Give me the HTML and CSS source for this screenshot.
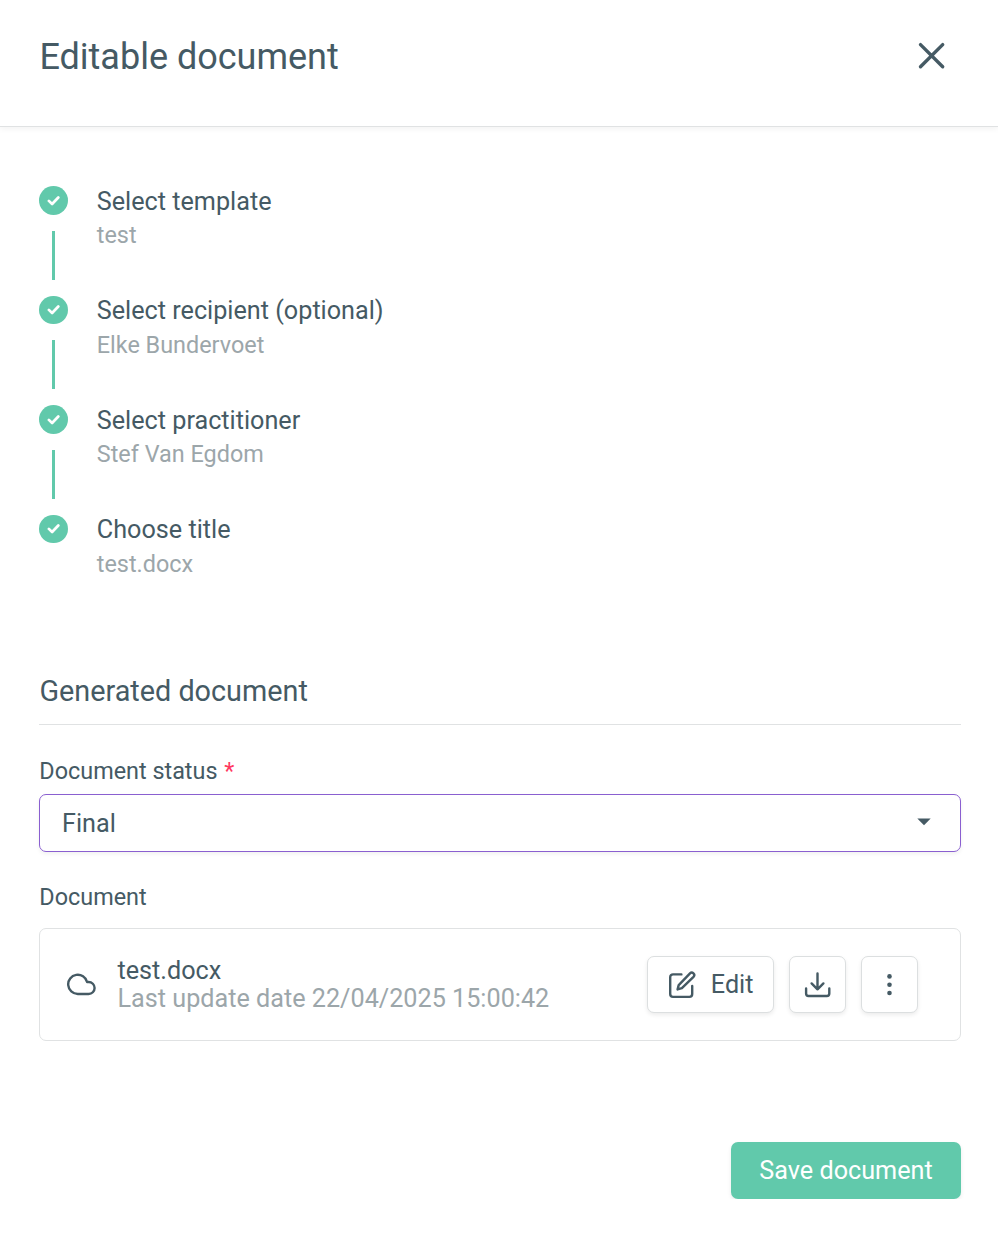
FILE: index.html
```html
<!DOCTYPE html>
<html lang="en">
<head>
<meta charset="utf-8">
<title>Editable document</title>
<link rel="stylesheet" href="styles.css">
</head>
<body>
<header class="header">
  <h1 class="title">Editable document</h1>
  <button class="close" aria-label="Close">
    <svg width="28" height="28" viewBox="0 0 28 28"><path d="M2.5 2.6 24.7 24.8M24.7 2.6 2.5 24.8"/></svg>
  </button>
</header>
<main class="content">
  <ol class="steps">
    <li class="step">
      <div class="marker"><span class="dot"><svg width="14" height="12" viewBox="0 0 14 12"><path d="M1.9 5.9 5.1 9 11.3 2.5"/></svg></span><span class="line"></span></div>
      <div class="step-text"><span class="step-name">Select template</span><span class="step-value">test</span></div>
    </li>
    <li class="step">
      <div class="marker"><span class="dot"><svg width="14" height="12" viewBox="0 0 14 12"><path d="M1.9 5.9 5.1 9 11.3 2.5"/></svg></span><span class="line"></span></div>
      <div class="step-text"><span class="step-name">Select recipient (optional)</span><span class="step-value">Elke Bundervoet</span></div>
    </li>
    <li class="step">
      <div class="marker"><span class="dot"><svg width="14" height="12" viewBox="0 0 14 12"><path d="M1.9 5.9 5.1 9 11.3 2.5"/></svg></span><span class="line"></span></div>
      <div class="step-text"><span class="step-name">Select practitioner</span><span class="step-value">Stef Van Egdom</span></div>
    </li>
    <li class="step">
      <div class="marker"><span class="dot"><svg width="14" height="12" viewBox="0 0 14 12"><path d="M1.9 5.9 5.1 9 11.3 2.5"/></svg></span></div>
      <div class="step-text"><span class="step-name">Choose title</span><span class="step-value">test.docx</span></div>
    </li>
  </ol>

  <h2 class="section-title">Generated document</h2>

  <div class="label">Document status <span class="required">*</span></div>
  <div class="select">
    <span>Final</span>
    <svg width="14" height="8" viewBox="0 0 14 8"><path d="M.3.4h13.4L7 7.2z"/></svg>
  </div>

  <div class="label label-document">Document</div>
  <div class="card">
    <svg class="icon cloud" width="29" height="29" viewBox="0 0 24.17 24.17"><path d="M18 10h-1.26A8 8 0 1 0 9 20h9a5 5 0 0 0 0-10z"/></svg>
    <div class="file">
      <span class="file-name">test.docx</span>
      <span class="file-date">Last update date 22/04/2025 15:00:42</span>
    </div>
    <div class="actions">
      <button class="button edit">
        <svg class="icon" width="28" height="28" viewBox="0 0 28 28"><path d="M13.4 3.4H5A2.8 2.8 0 0 0 2.2 6.2V23.1A2.8 2.8 0 0 0 5 25.9H21.4A2.8 2.8 0 0 0 24.2 23.1V15"/><path d="M22 2.4A2.35 2.35 0 0 1 25.5 5.8L13.9 17.2 9.6 18.4 10.7 14.1Z"/></svg>
        <span>Edit</span>
      </button>
      <button class="button square" aria-label="Download">
        <svg class="icon" width="28" height="28" viewBox="0 0 28 28"><path d="M13.5 2.5V18.2M7.6 12.4 13.5 18.3 19.4 12.4M2.1 17.4V22.6A2.4 2.4 0 0 0 4.5 25H22.9A2.4 2.4 0 0 0 25.3 22.6V17.4"/></svg>
      </button>
      <button class="button square" aria-label="More">
        <svg width="6" height="22" viewBox="0 0 6 22"><circle cx="2.5" cy="2.4" r="2.3"/><circle cx="2.5" cy="10.7" r="2.3"/><circle cx="2.5" cy="19" r="2.3"/></svg>
      </button>
    </div>
  </div>

  <div class="footer"><button class="save">Save document</button></div>
</main>
</body>
</html>
```
FILE: styles.css
```css
* { box-sizing: border-box; }
body {
  margin: 0;
  background: #fff;
  color: #455a64;
  font-family: Roboto, sans-serif;
  font-size: 25.2px;
}
button { font: inherit; letter-spacing: inherit; color: inherit; padding: 0; cursor: pointer; }
svg { display: block; flex: none; }
.header {
  display: flex;
  align-items: center;
  justify-content: space-between;
  height: 127px;
  padding: 0 52px 14px 39.4px;
  border-bottom: 1px solid #e0e2e3;
  box-shadow: 0 2px 6px rgba(0, 0, 0, .05);
}
.title { margin: 0; padding-top: 2px; font-size: 36px; font-weight: 400; line-height: 42px; }
.close { background: none; border: 0; }
.close svg { fill: none; stroke: #455a64; stroke-width: 3.4; stroke-linecap: round; }
.content { padding: 59px 37px 0 39px; }
.steps { list-style: none; margin: 0; padding: 0; }
.step { display: flex; gap: 28.8px; height: 109.44px; }
.marker { display: flex; flex-direction: column; align-items: center; gap: 15.95px; width: 29px; padding-top: .25px; }
.dot { display: flex; align-items: center; justify-content: center; width: 29px; height: 28.8px; border-radius: 50%; background: #61c9ab; }
.dot svg { fill: none; stroke: #fff; stroke-width: 2.7; stroke-linecap: round; stroke-linejoin: round; }
.line { width: 3px; height: 49px; background: #61c9ab; }
.step-text { display: flex; flex-direction: column; padding-top: .75px; }
.step-name { line-height: 30px; }
.step-value { margin-top: 4.45px; font-size: 23.4px; line-height: 28px; color: #9ca6aa; }
.section-title { margin: 50.35px 0 0; height: 51px; padding-left: .4px; font-size: 28.8px; font-weight: 400; line-height: 34px; border-bottom: 1px solid #e0e2e3; }
.label { margin-top: 32px; padding-left: .3px; font-size: 23.4px; line-height: 28px; }
.required { margin-left: 1px; color: #ff3860; }
.select {
  display: flex;
  align-items: center;
  justify-content: space-between;
  height: 58px;
  margin-top: 9px;
  padding: 0 29px 0 22px;
  border: 1px solid #8a5fd0;
  border-radius: 7px;
  box-shadow: 0 2px 4px rgba(0, 0, 0, .06);
}
.select svg { fill: #455a64; margin-bottom: 2px; }
.label-document { margin-top: 31px; }
.card {
  display: flex;
  align-items: center;
  height: 113px;
  margin-top: 17px;
  padding: 0 42px 0 27px;
  border: 1px solid #e0e2e3;
  border-radius: 7px;
}
.icon { fill: none; stroke: #455a64; stroke-width: 2.4; stroke-linecap: round; stroke-linejoin: round; }
.cloud { stroke-width: 2; }
.file { display: flex; flex-direction: column; margin-left: 21.5px; line-height: 28px; }
.file-date { color: #9ca6aa; }
.actions { display: flex; gap: 15px; margin-left: auto; }
.button {
  display: flex;
  align-items: center;
  justify-content: center;
  height: 57px;
  background: #fff;
  border: 1px solid #dcdfe0;
  border-radius: 7px;
  box-shadow: 0 2px 4px rgba(0, 0, 0, .08);
}
.edit { width: 127px; gap: 15.3px; }
.square { width: 57px; }
.button circle { fill: #455a64; }
.footer { display: flex; justify-content: flex-end; margin-top: 101px; }
.save {
  width: 230px;
  height: 57px;
  border: 0;
  border-radius: 7px;
  background: #61c9ab;
  color: #fff;
  box-shadow: 0 2px 4px rgba(0, 0, 0, .08);
}
```
